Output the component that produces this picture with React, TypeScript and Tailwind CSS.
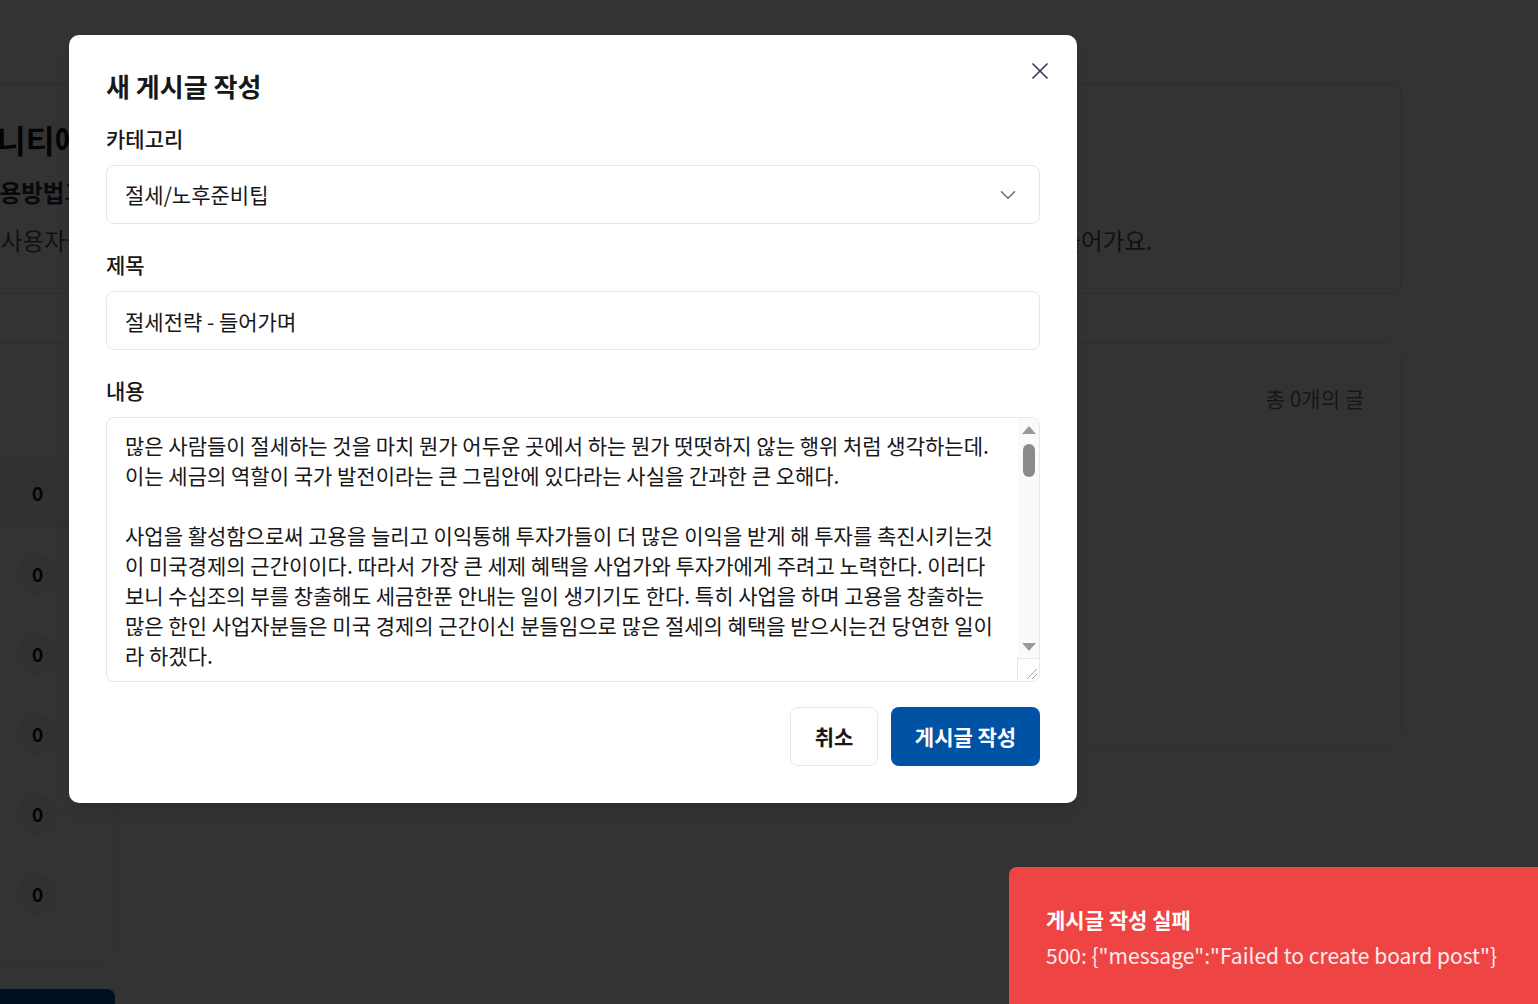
import { X, ChevronDown, BookOpen } from "lucide-react";

const body = `많은 사람들이 절세하는 것을 마치 뭔가 어두운 곳에서 하는 뭔가 떳떳하지 않는 행위 처럼 생각하는데.
이는 세금의 역할이 국가 발전이라는 큰 그림안에 있다라는 사실을 간과한 큰 오해다.

사업을 활성함으로써 고용을 늘리고 이익통해 투자가들이 더 많은 이익을 받게 해 투자를 촉진시키는것
이 미국경제의 근간이이다. 따라서 가장 큰 세제 혜택을 사업가와 투자가에게 주려고 노력한다. 이러다
보니 수십조의 부를 창출해도 세금한푼 안내는 일이 생기기도 한다. 특히 사업을 하며 고용을 창출하는
많은 한인 사업자분들은 미국 경제의 근간이신 분들임으로 많은 절세의 혜택을 받으시는건 당연한 일이
라 하겠다.

절세는 탈세와 다르다. 탈세는 법을 어기며 세금을 내지 않는 것이지만, 절세는 법이 허용하는 범위 안에서 세금을 합법적으로 줄이는 것이다. 미국 세법은 수많은 공제와 혜택을 마련해 두고 있으며, 이를 제대로 알고 활용하는 것은 납세자의 당연한 권리이다.

이번 연재에서는 사업자와 개인이 활용할 수 있는 다양한 절세 전략을 하나씩 살펴보고자 한다. 은퇴 계좌를 활용한 절세, 법인 형태 선택에 따른 세금 차이, 부동산 투자와 감가상각, 그리고 노후 준비와 연계된 절세 방법까지 실제 사례를 중심으로 알기 쉽게 정리해 보겠다.`;

const rows = ["세무", "절세", "노후", "투자", "자유"];

export default function App() {
  return (
    <div className="relative h-[1004px] w-full overflow-hidden bg-white font-['Noto_Sans_CJK_KR','Noto_Sans',sans-serif] text-gray-900">
      {/* underlying page */}
      <div className="ml-[-94px] w-[1496px] pt-[83px]">
        <section className="h-[211px] rounded-xl border border-blue-200 bg-white pl-[32px] pt-[36px]">
          <h1 className="whitespace-nowrap text-[31.4px] font-bold leading-[40px] text-gray-900">
            커뮤니티에 오신 것을 환영합니다
          </h1>
          <div className="mt-[16px] flex h-[32px] items-center gap-[11px]">
            <BookOpen size={28} className="text-blue-600" />
            <p className="whitespace-nowrap text-[23.5px] leading-[32px] text-gray-800">
              <span className="font-bold">이용방법</span>과 커뮤니티 규칙을 꼭 확인해주세요
            </p>
          </div>
          <p className="mt-[16px] whitespace-nowrap pl-[62px] text-[23.5px] leading-[32px] text-gray-600">
            사용자들이 서로의 경험과 지식을 나누며 세금 절세, 노후 준비에 대한 궁금증을 함께 해결하는 건강한 공간을 만들어가요.
          </p>
        </section>

        <div className="mt-[49px] flex items-start gap-6">
          <div className="w-[209px] shrink-0">
            <aside className="h-[620px] rounded-xl border border-gray-200 bg-white">
              <div className="flex h-[114px] items-center px-6">
                <h2 className="text-[21px] font-bold">게시판</h2>
              </div>
              <div className="flex h-[70px] items-center border-y border-gray-200 bg-blue-50 px-6">
                <span className="w-[86px] text-[21px] font-semibold text-blue-700">전체</span>
                <span className="flex h-[41px] w-[41px] items-center justify-center text-[19.6px] font-bold text-gray-900">
                  0
                </span>
              </div>
              <div className="mt-[6px] flex flex-col">
                {rows.map((r) => (
                  <div key={r} className="flex h-[80px] items-center px-6">
                    <span className="w-[86px] text-[21px] text-gray-700">{r}</span>
                    <span className="flex h-[41px] w-[41px] items-center justify-center rounded-full bg-gray-100 text-[19.6px] font-bold text-gray-900">
                      0
                    </span>
                  </div>
                ))}
              </div>
            </aside>
            <button className="mt-[26px] flex h-[56px] w-full items-center justify-center rounded-lg bg-[#0052a4] text-[21px] font-semibold text-white">
              글쓰기
            </button>
          </div>

          <section className="h-[403px] flex-1 rounded-xl border border-gray-200 bg-white">
            <div className="flex items-center justify-between px-[37px] pt-[40px]">
              <h2 className="text-[23.5px] font-bold leading-[28px]">전체 게시글</h2>
              <span className="text-[21px] leading-[28px] text-gray-500">총 0개의 글</span>
            </div>
          </section>
        </div>
      </div>

      {/* overlay */}
      <div className="absolute inset-0 bg-black/80" />

      {/* modal */}
      <div className="absolute left-[69px] top-[35px] w-[1008px] rounded-[10px] bg-white px-[37px] pb-[37px] pt-[35px] shadow-lg">
        <button className="absolute right-[23px] top-[22px] text-gray-700">
          <X size={28} strokeWidth={1.5} />
        </button>
        <h2 className="text-[26px] font-bold leading-[32px] text-[#171717]">새 게시글 작성</h2>

        <div className="mt-[23px] flex flex-col gap-[27px]">
          <div>
            <label className="mb-[13px] block text-[21px] font-medium leading-[27px] text-[#171717]">카테고리</label>
            <div className="flex h-[59px] items-center justify-between rounded-lg border border-gray-200 pl-[18px] pr-[18px]">
              <span className="text-[21px] text-[#171717]">절세/노후준비팁</span>
              <ChevronDown size={26} strokeWidth={1.5} className="text-gray-500" />
            </div>
          </div>

          <div>
            <label className="mb-[13px] block text-[21px] font-medium leading-[27px] text-[#171717]">제목</label>
            <input
              defaultValue="절세전략 - 들어가며"
              className="h-[59px] w-full rounded-lg border border-gray-200 px-[18px] text-[21px] text-[#171717] outline-none"
            />
          </div>

          <div>
            <label className="mb-[13px] block text-[21px] font-medium leading-[27px] text-[#171717]">내용</label>
            <div className="relative">
              <textarea
                defaultValue={body}
                className="block h-[265px] w-full resize-none rounded-lg border border-gray-200 py-[12px] pl-[18px] pr-[30px] text-[21px] leading-[30px] text-[#171717] outline-none [scrollbar-width:none]"
              />
              {/* scrollbar */}
              <div className="pointer-events-none absolute right-[1px] top-[1px] flex h-[240px] w-[21px] flex-col items-center rounded-tr-lg bg-[#fafafa] pb-[7px] pt-[8px]">
                <svg width="14" height="8" viewBox="0 0 14 8">
                  <path d="M7 0 L14 8 L0 8 Z" fill="#9a9a9a" />
                </svg>
                <div className="mt-[10px] h-[33px] w-[12px] rounded-full bg-[#8a8a8a]" />
                <div className="flex-1" />
                <svg width="14" height="8" viewBox="0 0 14 8">
                  <path d="M0 0 L14 0 L7 8 Z" fill="#9a9a9a" />
                </svg>
              </div>
              <div className="pointer-events-none absolute bottom-[1px] right-[1px] h-[23px] w-[22px] rounded-br-lg border-l border-t border-gray-200 bg-white">
                <svg width="21" height="22" viewBox="0 0 21 22">
                  <path d="M9 20 L19 10 M14 20 L19 15" stroke="#9ca3af" strokeWidth="1" />
                </svg>
              </div>
            </div>
          </div>
        </div>

        <div className="mt-[25px] flex justify-end gap-[13px]">
          <button className="h-[59px] w-[88px] rounded-lg border border-gray-200 bg-white text-[21px] font-semibold text-[#171717]">
            취소
          </button>
          <button className="h-[59px] w-[149px] rounded-lg bg-[#0052a4] text-[21px] font-semibold text-white">
            게시글 작성
          </button>
        </div>
      </div>

      {/* toast */}
      <div className="absolute left-[1009px] top-[867px] h-[180px] w-[560px] rounded-lg bg-[#ef4444] px-[37px] pt-[38px] text-white">
        <p className="text-[21px] font-bold leading-[28px]">게시글 작성 실패</p>
        <p className="mt-[8px] text-[21px] leading-[28px] text-white/90">
          500: {'{"message":"Failed to create board post"}'}
        </p>
      </div>
    </div>
  );
}
